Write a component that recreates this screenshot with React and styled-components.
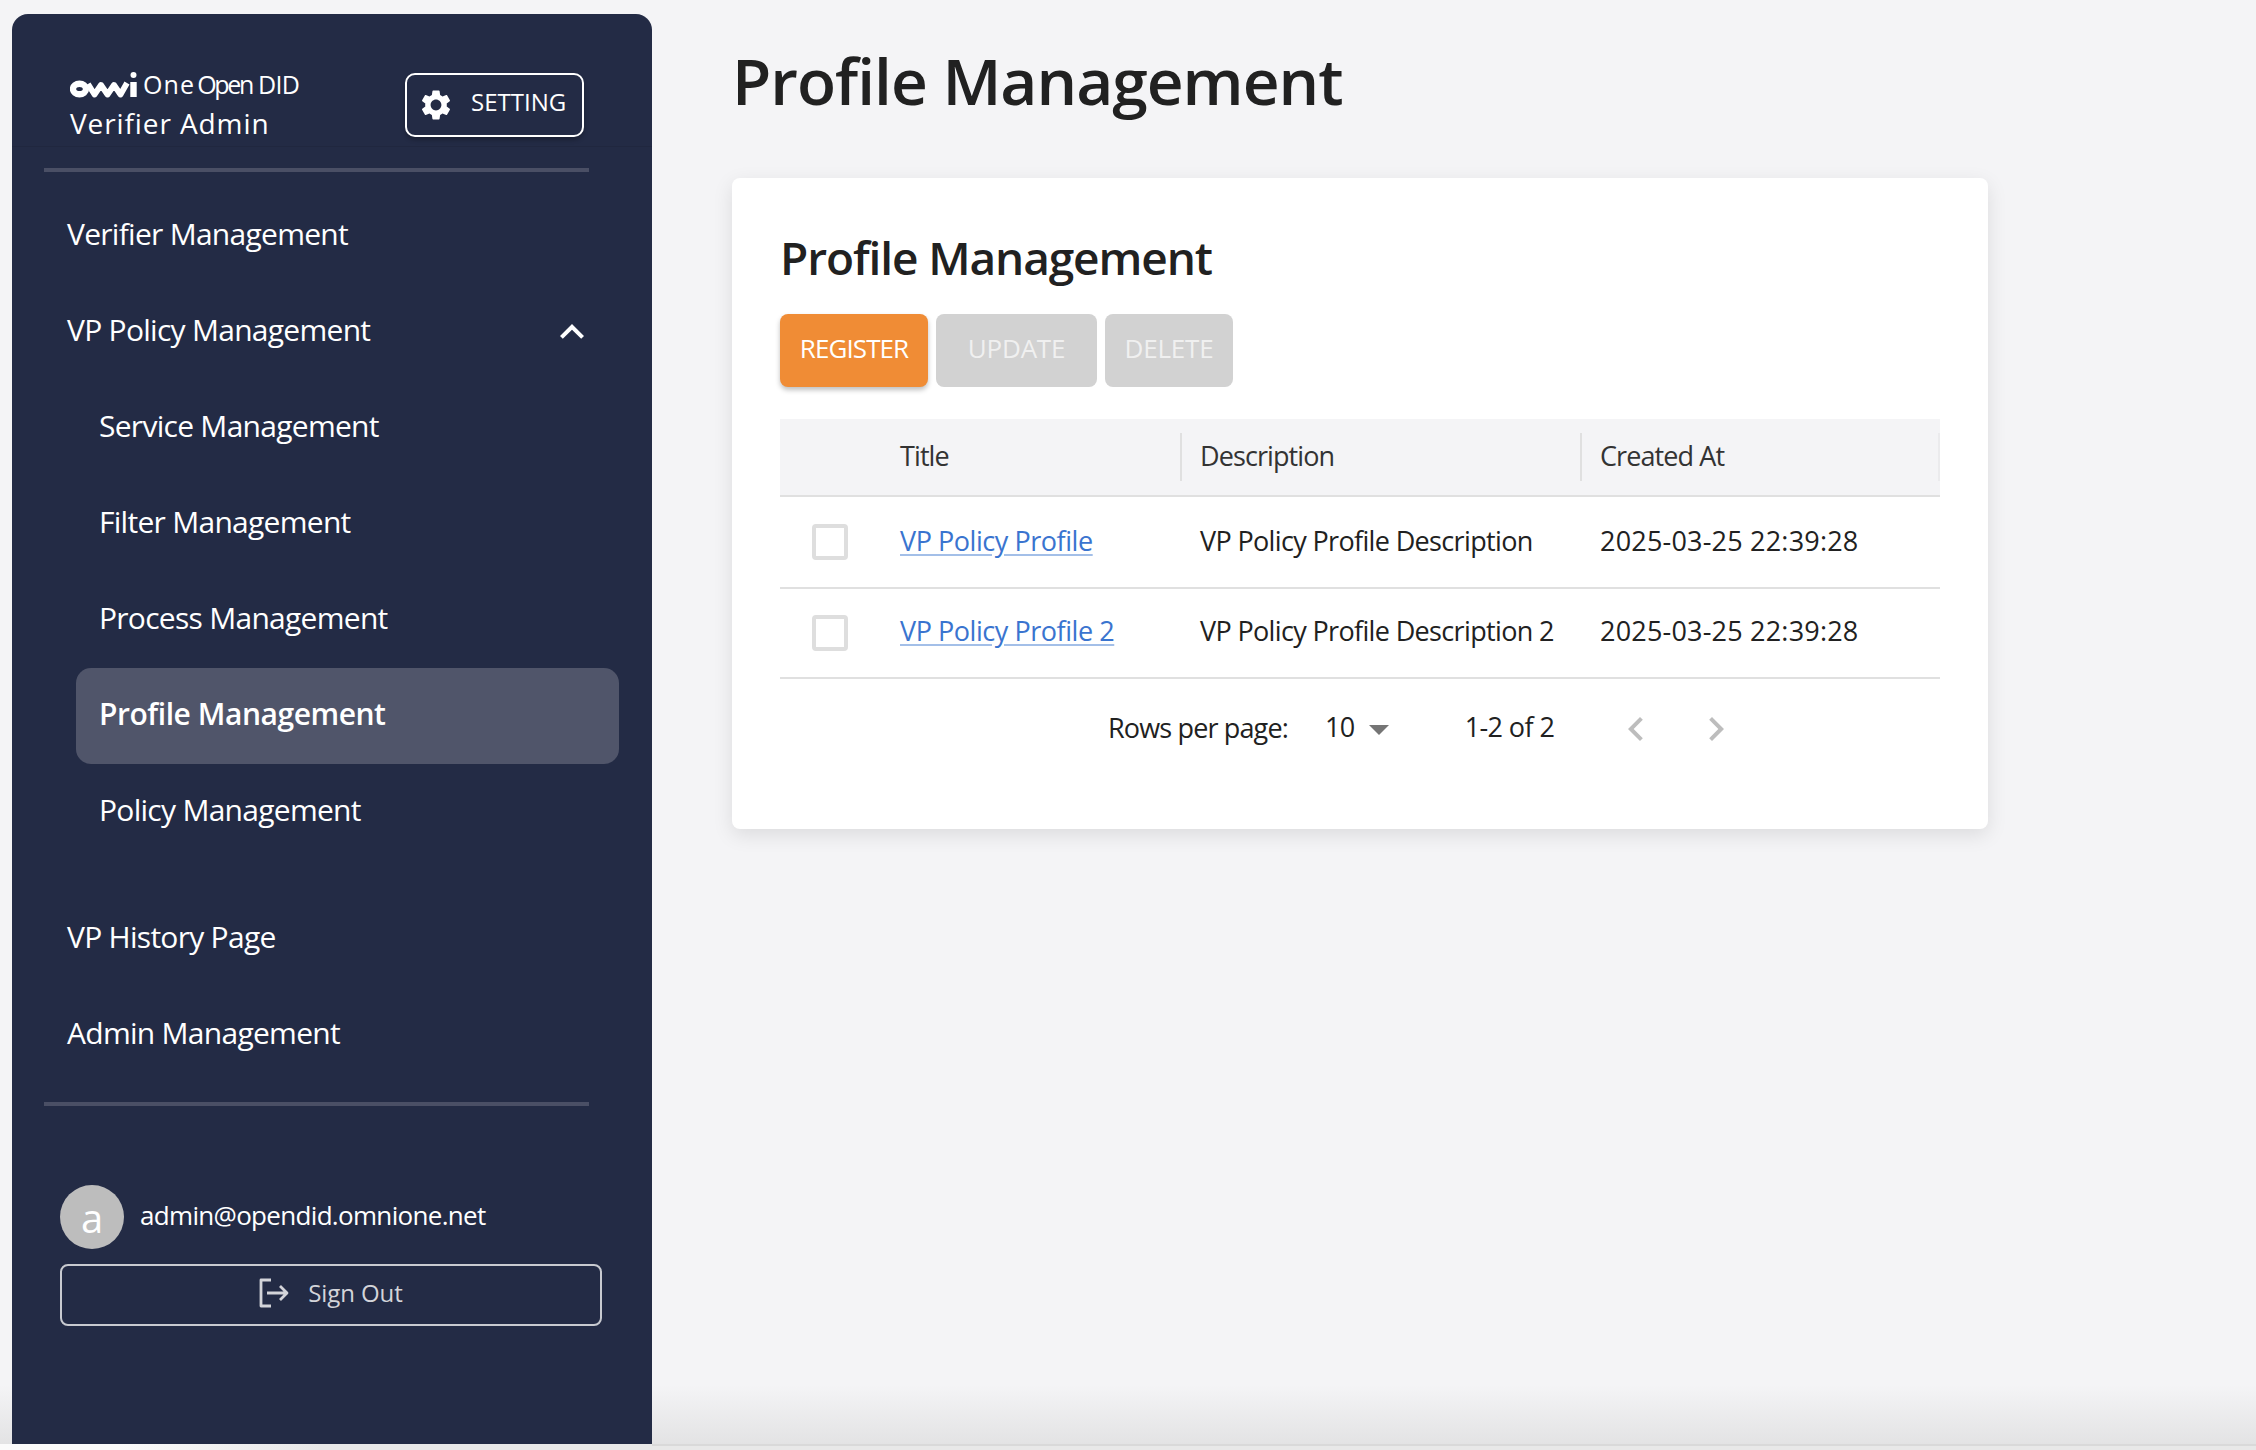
import React from 'react';
import styled, { createGlobalStyle } from 'styled-components';

const FONT = '"Open Sans", "Noto Sans CJK KR", sans-serif';

const Global = createGlobalStyle`
  html, body { margin: 0; padding: 0; background: #f4f4f6; }
  body { font-family: ${FONT}; }
  * { box-sizing: border-box; }
`;

const Page = styled.div`
  width: 2256px;
  height: 1450px;
  display: flex;
  flex-direction: column;
  overflow: hidden;
`;

const Body = styled.div`
  height: 1444px;
  flex: none;
  display: flex;
  align-items: flex-start;
  padding: 14px 0 0 12px;
  background: linear-gradient(to bottom, #f4f4f6 0, #f4f4f6 1385px, #e3e3e4 1444px);
`;

const BottomBar = styled.div`
  height: 6px;
  flex: none;
  background:
    linear-gradient(to right, transparent 652px, #d9d9d9 652px) top / 100% 2px no-repeat,
    linear-gradient(to right, #fbfbfb 0, #fbfbfb 120px, #e8e8e8 320px);
`;

const Sidebar = styled.aside`
  width: 640px;
  height: 1430px;
  flex: none;
  background: #232b45;
  border-radius: 16px 16px 0 0;
  color: #fff;
  display: flex;
  flex-direction: column;
`;

const SideHeader = styled.header`
  height: 133px;
  padding: 52px 68px 0 58px;
  display: flex;
  justify-content: space-between;
  align-items: flex-start;
  border-bottom: 1px solid #20273f;
  margin-bottom: 21px;
`;

const Brand = styled.div`
  display: flex;
  flex-direction: column;
  padding-top: 5px;
`;

const LogoRow = styled.div`
  display: flex;
  align-items: flex-end;
  height: 27px;
`;

const LogoWord = styled.span`
  font-size: 25px;
  font-weight: 500;
  line-height: 27px;
  letter-spacing: ${p => p.$ls}px;
  margin-left: ${p => p.$ml}px;
  color: #fff;
`;

const AppName = styled.div`
  font-size: 28px;
  line-height: 38px;
  letter-spacing: 0.9px;
  margin-top: 6px;
  color: #fff;
`;

const SettingButton = styled.button`
  margin-top: 7px;
  width: 179px;
  height: 64px;
  border: 2px solid #fff;
  border-radius: 10px;
  background: transparent;
  color: #fff;
  font: 400 24px ${FONT};
  display: flex;
  align-items: center;
  gap: 17px;
  padding: 0 0 0 11px;
  box-shadow: 0 3px 4px rgba(0, 0, 0, 0.25);
`;

const SettingLabel = styled.span`
  padding-bottom: 7px;
`;

const Divider = styled.div`
  width: 545px;
  height: 4px;
  margin-left: 32px;
  background: #4a4f65;
  flex: none;
`;

const Nav = styled.nav`
  margin-top: 16px;
  margin-bottom: 19px;
  display: flex;
  flex-direction: column;
`;

const NavItem = styled.div`
  height: 96px;
  display: flex;
  align-items: center;
  justify-content: space-between;
  margin-left: ${p => (p.$sub ? '64px' : '0')};
  margin-right: ${p => (p.$sub ? '33px' : '0')};
  padding: 0 56px 6px ${p => (p.$sub ? '23px' : '55px')};
  border-radius: 15px;
  font-size: 30px;
  letter-spacing: ${p => (p.$active ? '-0.45px' : '-0.72px')};
  font-weight: ${p => (p.$active ? 600 : 400)};
  background: ${p => (p.$active ? '#50556a' : 'transparent')};
  color: #fff;
  margin-bottom: ${p => (p.$last ? '31px' : '0')};
`;

const NavChevron = styled.svg`
  flex: none;
  margin-top: 6px;
`;

const SignBlock = styled.div`
  margin-top: 79px;
  padding: 0 50px 0 48px;
  display: flex;
  flex-direction: column;
  gap: 15px;
`;

const UserRow = styled.div`
  display: flex;
  align-items: center;
  gap: 16px;
`;

const Avatar = styled.div`
  width: 64px;
  height: 64px;
  border-radius: 50%;
  background: #bdbdbd;
  color: #fff;
  font-size: 40px;
  display: flex;
  align-items: center;
  justify-content: center;
`;

const Email = styled.div`
  font-size: 26px;
  letter-spacing: -0.68px;
  color: #fff;
  margin-top: -4px;
`;

const SignOut = styled.button`
  height: 62px;
  border: 2px solid #c8cad0;
  border-radius: 8px;
  background: transparent;
  color: #d3d4d9;
  font: 400 24px ${FONT};
  letter-spacing: -0.1px;
  display: flex;
  align-items: center;
  justify-content: center;
  gap: 19px;
  padding: 0 0 5px;
`;

const Main = styled.main`
  flex: none;
  width: 1260px;
  margin-left: 80px;
  display: flex;
  flex-direction: column;
`;

const PageTitle = styled.h1`
  margin: 22px 0 0;
  font-size: 64px;
  line-height: 90px;
  font-weight: 600;
  letter-spacing: -1px;
  color: #212121;
`;

const Card = styled.section`
  margin-top: 52px;
  background: #fff;
  height: 651px;
  width: 1256px;
  border-radius: 8px;
  box-shadow: 0 6px 20px rgba(0, 0, 0, 0.1);
  padding: 48px;
`;

const CardTitle = styled.h2`
  margin: 0;
  font-size: 46px;
  line-height: 62px;
  font-weight: 600;
  letter-spacing: -1.1px;
  color: #212121;
`;

const Actions = styled.div`
  margin-top: 26px;
  display: flex;
  gap: 8px;
`;

const ActionButton = styled.button`
  width: ${p => p.$w}px;
  height: 73px;
  border: 0;
  border-radius: 8px;
  font: 400 26px ${FONT};
  letter-spacing: ${p => (p.$primary ? '-0.9px' : '-0.2px')};
  color: ${p => (p.$primary ? '#fff' : '#f0f0f0')};
  background: ${p => (p.$primary ? '#f08c35' : '#d2d2d2')};
  box-shadow: ${p => (p.$primary ? '0 3px 5px rgba(0,0,0,0.25)' : 'none')};
  padding: 0 0 6px;
`;

const Table = styled.div`
  margin-top: 32px;
  width: 1160px;
`;

const Row = styled.div`
  display: grid;
  grid-template-columns: 120px 280px 400px 360px;
  height: ${p => p.$h}px;
  align-items: center;
  background: ${p => (p.$head ? '#f4f4f6' : 'transparent')};
  border-bottom: 2px solid #e0e0e0;
  font-size: 27px;
  color: #212121;
`;

const HeadCell = styled.div`
  height: 48px;
  display: flex;
  align-items: center;
  padding-left: ${p => (p.$sep ? '18px' : '0')};
  border-left: ${p => (p.$sep ? '2px solid #e0e0e0' : '0')};
  border-right: ${p => (p.$end ? '2px solid #ebebed' : '0')};
  color: #333;
  letter-spacing: -0.9px;
  padding-bottom: 4px;
`;

const Cell = styled.div`
  padding-left: ${p => (p.$first ? '0' : '20px')};
  padding-bottom: ${p => p.$pb}px;
  letter-spacing: ${p => p.$ls}px;
  white-space: nowrap;
`;

const CheckCell = styled.div`
  display: flex;
  padding-left: 32px;
`;

const Checkbox = styled.span`
  width: 36px;
  height: 36px;
  border: 4px solid #dedede;
  border-radius: 4px;
  background: #fff;
  display: block;
`;

const TitleLink = styled.a`
  color: #3a74cf;
  text-decoration: underline;
  text-decoration-color: #a3bfe8;
  text-underline-offset: 3px;
`;

const Pager = styled.div`
  height: 100px;
  width: 1160px;
  display: flex;
  align-items: center;
  padding-left: 328px;
  font-size: 27px;
  letter-spacing: -0.6px;
  color: #212121;
`;

const Rows = styled.span`
  width: 217px;
  flex: none;
  padding-bottom: 4px;
  letter-spacing: -0.85px;
`;

const RowsValue = styled.span`
  padding-bottom: 6px;
`;

const Caret = styled.span`
  width: 0;
  height: 0;
  border-left: 10px solid transparent;
  border-right: 10px solid transparent;
  border-top: 10px solid #757575;
  margin: 2px 0 0 14px;
`;

const Range = styled.span`
  margin-left: 76px;
  padding-bottom: 6px;
`;

const PageButton = styled.svg`
  flex: none;
  fill: #bdbdbd;
  margin-left: ${p => p.$ml}px;
`;

const Gear = () => (
  <svg width="36" height="36" viewBox="0 0 24 24" fill="#fff" style={{ flex: 'none' }}>
    <path d="M19.14 12.94c.04-.3.06-.61.06-.94 0-.32-.02-.64-.07-.94l2.03-1.58c.18-.14.23-.41.12-.61l-1.92-3.32c-.12-.22-.37-.29-.59-.22l-2.39.96c-.5-.38-1.03-.7-1.62-.94l-.36-2.54c-.04-.24-.24-.41-.48-.41h-3.84c-.24 0-.43.17-.47.41l-.36 2.54c-.59.24-1.13.57-1.62.94l-2.39-.96c-.22-.08-.47 0-.59.22L2.74 8.87c-.12.21-.08.47.12.61l2.03 1.58c-.05.3-.09.63-.09.94s.02.64.07.94l-2.03 1.58c-.18.14-.23.41-.12.61l1.92 3.32c.12.22.37.29.59.22l2.39-.96c.5.38 1.03.7 1.62.94l.36 2.54c.05.24.24.41.48.41h3.84c.24 0 .44-.17.47-.41l.36-2.54c.59-.24 1.13-.56 1.62-.94l2.39.96c.22.08.47 0 .59-.22l1.92-3.32c.12-.22.07-.47-.12-.61l-2.01-1.58zM12 15.6c-1.98 0-3.6-1.62-3.6-3.6s1.62-3.6 3.6-3.6 3.6 1.62 3.6 3.6-1.62 3.6-3.6 3.6z" />
  </svg>
);

const LogoMark = () => (
  <svg width="67" height="26" viewBox="0 0 67 26" fill="none" stroke="#fff" style={{ flex: 'none' }}>
    <ellipse cx="9.5" cy="17" rx="6.5" ry="5.2" strokeWidth="6.4" />
    <path d="M18 12 L24.5 22.5 L31 13 L37.5 22.5 L44 13 L50.5 22.5 L57 11" strokeWidth="5.8" strokeLinejoin="round" />
    <path d="M63.5 10 V25" strokeWidth="6.4" />
    <circle cx="63.5" cy="3" r="3" fill="#fff" stroke="none" />
  </svg>
);

const SignOutIcon = () => (
  <svg width="30" height="30" viewBox="0 0 30 30" fill="none" stroke="#d3d4d9" strokeWidth="2.8" strokeLinejoin="round" style={{ flex: 'none' }}>
    <path d="M12 2 H2 V28 H12" />
    <path d="M8 15 H28 M21 8 L28 15 L21 22" />
  </svg>
);

const navItems = [
  { label: 'Verifier Management' },
  { label: 'VP Policy Management', open: true },
  { label: 'Service Management', sub: true },
  { label: 'Filter Management', sub: true },
  { label: 'Process Management', sub: true },
  { label: 'Profile Management', sub: true, active: true },
  { label: 'Policy Management', sub: true, last: true },
  { label: 'VP History Page' },
  { label: 'Admin Management' },
];

const rows = [
  { title: 'VP Policy Profile', desc: 'VP Policy Profile Description', h: 92, pb: 4 },
  { title: 'VP Policy Profile 2', desc: 'VP Policy Profile Description 2', h: 90, pb: 6 },
];

export default function App() {
  return (
    <Page>
      <Global />
      <Body>
        <Sidebar>
          <SideHeader>
            <Brand>
              <LogoRow>
                <LogoMark />
                <LogoWord $ml={6} $ls={1.1}>One</LogoWord>
                <LogoWord $ml={2} $ls={-2.3}>Open</LogoWord>
                <LogoWord $ml={6} $ls={-0.7}>DID</LogoWord>
              </LogoRow>
              <AppName>Verifier Admin</AppName>
            </Brand>
            <SettingButton>
              <Gear />
              <SettingLabel>SETTING</SettingLabel>
            </SettingButton>
          </SideHeader>
          <Divider />
          <Nav>
            {navItems.map(item => (
              <NavItem key={item.label} $sub={item.sub} $active={item.active} $last={item.last}>
                {item.label}
                {item.open && (
                  <NavChevron width="48" height="48" viewBox="0 0 24 24" fill="#fff">
                    <path d="M12 8l-6 6 1.41 1.41L12 10.83l4.59 4.58L18 14z" />
                  </NavChevron>
                )}
              </NavItem>
            ))}
          </Nav>
          <Divider />
          <SignBlock>
            <UserRow>
              <Avatar>a</Avatar>
              <Email>admin@opendid.omnione.net</Email>
            </UserRow>
            <SignOut>
              <SignOutIcon />
              Sign Out
            </SignOut>
          </SignBlock>
        </Sidebar>
        <Main>
          <PageTitle>Profile Management</PageTitle>
          <Card>
            <CardTitle>Profile Management</CardTitle>
            <Actions>
              <ActionButton $primary $w={148}>REGISTER</ActionButton>
              <ActionButton $w={161}>UPDATE</ActionButton>
              <ActionButton $w={128}>DELETE</ActionButton>
            </Actions>
            <Table>
              <Row $head $h={78}>
                <HeadCell />
                <HeadCell>Title</HeadCell>
                <HeadCell $sep>Description</HeadCell>
                <HeadCell $sep $end>Created At</HeadCell>
              </Row>
              {rows.map(r => (
                <Row key={r.title} $h={r.h}>
                  <CheckCell><Checkbox /></CheckCell>
                  <Cell $first $ls={-0.45} $pb={r.pb}><TitleLink>{r.title}</TitleLink></Cell>
                  <Cell $ls={-0.65} $pb={r.pb}>{r.desc}</Cell>
                  <Cell $ls={0.2} $pb={r.pb}>2025-03-25 22:39:28</Cell>
                </Row>
              ))}
            </Table>
            <Pager>
              <Rows>Rows per page:</Rows>
              <RowsValue>10</RowsValue>
              <Caret />
              <Range>1-2 of 2</Range>
              <PageButton $ml={58} width="48" height="48" viewBox="0 0 24 24">
                <path d="M15.41 7.41 14 6l-6 6 6 6 1.41-1.41L10.83 12z" />
              </PageButton>
              <PageButton $ml={32} width="48" height="48" viewBox="0 0 24 24">
                <path d="M10 6 8.59 7.41 13.17 12l-4.58 4.59L10 18l6-6z" />
              </PageButton>
            </Pager>
          </Card>
        </Main>
      </Body>
      <BottomBar />
    </Page>
  );
}
